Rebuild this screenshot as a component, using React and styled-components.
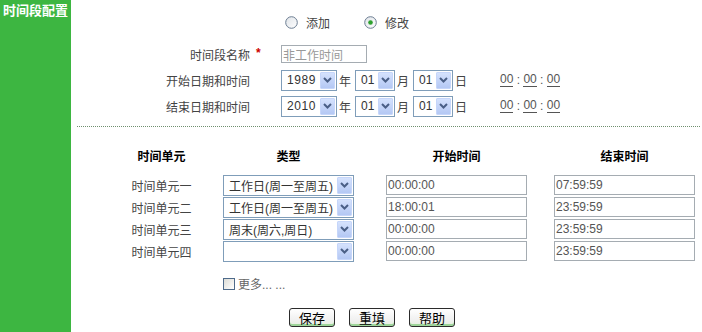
import { Fragment } from 'react';
import styled, { createGlobalStyle } from 'styled-components';

const GlobalStyle = createGlobalStyle`
  html, body {
    margin: 0;
    padding: 0;
    background: #fff;
  }
  body {
    font-family: "Liberation Sans", "Noto Sans CJK SC", sans-serif;
    font-size: 12px;
    color: #444;
  }
`;

const Page = styled.div`
  display: flex;
  width: 702px;
  height: 332px;
  overflow: hidden;
`;

const Sidebar = styled.div`
  width: 71px;
  flex-shrink: 0;
  background: #3db641;
  color: #fff;
  font-family: "Noto Sans CJK SC", sans-serif;
  font-weight: bold;
  font-size: 13px;
  line-height: 14px;
  padding: 3px 0 0 3px;
  box-sizing: border-box;
  white-space: nowrap;
`;

const Main = styled.div`
  flex: 1;
  display: flex;
  flex-direction: column;
`;

const RadioRow = styled.div`
  display: flex;
  align-items: center;
  margin: 15px 0 0 214px;
  height: 14px;
  gap: 34px;
`;

const RadioItem = styled.label`
  display: flex;
  align-items: center;
  gap: 8px;
  color: #444;
`;

const FormGrid = styled.div`
  display: grid;
  grid-template-columns: 179px auto;
  grid-auto-rows: 26px;
  column-gap: 31px;
  margin-top: 12px;
  align-items: center;
`;

const Label = styled.div`
  text-align: right;
  white-space: nowrap;
  color: #444;
  position: relative;
`;

const Star = styled.span`
  position: absolute;
  left: 100%;
  margin-left: 6px;
  color: #c00;
  font-weight: bold;
`;

const NameInput = styled.input`
  width: 86px;
  height: 18px;
  box-sizing: border-box;
  border: 1px solid #a5acb2;
  font-family: "Liberation Sans", "Noto Sans CJK SC", sans-serif;
  font-size: 12px;
  color: #999;
  padding: 0 1px;
  outline: none;
`;

const DateLine = styled.div`
  display: flex;
  align-items: center;
`;

const Unit = styled.span`
  margin: 0 4px 0 2px;
  color: #444;
`;

const DropBox = styled.div`
  display: flex;
  align-items: center;
  width: ${(p) => p.$w}px;
  height: 21px;
  box-sizing: border-box;
  border: 1px solid #7f9db9;
  background: #fff;
  padding: 1px;
`;

const DropValue = styled.span`
  flex: 1;
  padding-left: 4px;
  color: #333;
  white-space: nowrap;
  overflow: hidden;
  letter-spacing: ${(p) => (p.$wide ? '0.6px' : '0')};
`;

const DropArrow = styled.span`
  width: 15px;
  height: 17px;
  box-sizing: border-box;
  border: 1px solid #c6d6fa;
  border-radius: 1px;
  background: linear-gradient(#d5e2fd, #b4c8f4);
  display: flex;
  align-items: center;
  justify-content: center;
`;

const TimeGroup = styled.div`
  display: flex;
  align-items: center;
  margin-left: 29px;
  color: #555;
`;

const TimePart = styled.span`
  border-bottom: 1px solid #555;
  line-height: 13px;
`;

const Colon = styled.span`
  width: 10px;
  text-align: center;
`;

const Divider = styled.div`
  margin: 7px 2px 0 6px;
  border-top: 1px dotted #6f8f6f;
`;

const Table = styled.div`
  display: grid;
  grid-template-columns: 123px 131px 173px 168px;
  grid-template-rows: 30px repeat(4, 20px);
  row-gap: 2px;
  margin: 16px 0 0 29px;
`;

const Cell = styled.div`
  display: flex;
  justify-content: flex-end;
  align-items: center;
`;

const HeadCell = styled.div`
  justify-self: end;
  width: ${(p) => p.$w}px;
  text-align: center;
  font-weight: bold;
  color: #000;
  font-family: "Noto Sans CJK SC", sans-serif;
  line-height: 26px;
`;

const RowLabel = styled.div`
  width: 123px;
  text-align: center;
  color: #444;
`;

const TimeInput = styled.input`
  width: 141px;
  height: 20px;
  box-sizing: border-box;
  border: 1px solid #a5acb2;
  font-family: "Liberation Sans", sans-serif;
  font-size: 12px;
  color: #555;
  padding: 0 1px;
  outline: none;
`;

const MoreRow = styled.label`
  display: flex;
  align-items: center;
  margin: 14px 0 0 152px;
  color: #666;
  gap: 3px;
`;

const CheckBox = styled.span`
  width: 12px;
  height: 12px;
  box-sizing: border-box;
  border: 1px solid #4e6a8a;
  background: linear-gradient(135deg, #dcdcd6, #fff);
`;

const Buttons = styled.div`
  display: flex;
  gap: 14px;
  margin: 16px 0 0 218px;
`;

const Btn = styled.button`
  width: 46px;
  height: 19px;
  padding: 0;
  border: 1px solid #2b2b2b;
  border-radius: 3px;
  background: linear-gradient(#ffffff, #f0f0f0 65%, #e2efdc);
  box-shadow: inset 0 -2px 0 #9ed59a;
  font-family: "Noto Sans CJK SC", sans-serif;
  font-size: 13px;
  line-height: 17px;
  color: #000;
`;

const Radio = ({ checked }) => (
  <svg width="13" height="13" viewBox="0 0 13 13">
    <defs>
      <linearGradient id="rg" x1="0" y1="0" x2="1" y2="1">
        <stop offset="0" stopColor="#dfe3e8" />
        <stop offset="1" stopColor="#ffffff" />
      </linearGradient>
    </defs>
    <circle cx="6.5" cy="6.5" r="5.8" fill="url(#rg)" stroke="#6c7d92" strokeWidth="1" />
    {checked && <circle cx="6.5" cy="6.5" r="2.3" fill="#2ea12e" />}
  </svg>
);

const Dropdown = ({ w, value, wide }) => (
  <DropBox $w={w}>
    <DropValue $wide={wide}>{value}</DropValue>
    <DropArrow>
      <svg width="9" height="6" viewBox="0 0 9 6">
        <path d="M1 1 L4.5 4.5 L8 1" fill="none" stroke="#4a5f86" strokeWidth="2" />
      </svg>
    </DropArrow>
  </DropBox>
);

const Time = () => (
  <TimeGroup>
    <TimePart>00</TimePart>
    <Colon>:</Colon>
    <TimePart>00</TimePart>
    <Colon>:</Colon>
    <TimePart>00</TimePart>
  </TimeGroup>
);

const DateField = ({ year }) => (
  <DateLine>
    <Dropdown w={56} value={year} wide />
    <Unit>年</Unit>
    <Dropdown w={40} value="01" />
    <Unit>月</Unit>
    <Dropdown w={40} value="01" />
    <Unit>日</Unit>
    <Time />
  </DateLine>
);

const units = [
  { name: '时间单元一', type: '工作日(周一至周五)', start: '00:00:00', end: '07:59:59' },
  { name: '时间单元二', type: '工作日(周一至周五)', start: '18:00:01', end: '23:59:59' },
  { name: '时间单元三', type: '周末(周六,周日)', start: '00:00:00', end: '23:59:59' },
  { name: '时间单元四', type: '', start: '00:00:00', end: '23:59:59' },
];

export default function App() {
  return (
    <Page>
      <GlobalStyle />
      <Sidebar>时间段配置</Sidebar>
      <Main>
        <RadioRow>
          <RadioItem>
            <Radio />
            添加
          </RadioItem>
          <RadioItem>
            <Radio checked />
            修改
          </RadioItem>
        </RadioRow>

        <FormGrid>
          <Label>
            时间段名称<Star>*</Star>
          </Label>
          <div>
            <NameInput defaultValue="非工作时间" />
          </div>
          <Label>开始日期和时间</Label>
          <DateField year="1989" />
          <Label>结束日期和时间</Label>
          <DateField year="2010" />
        </FormGrid>

        <Divider />

        <Table>
          <HeadCell $w={123}>时间单元</HeadCell>
          <HeadCell $w={131}>类型</HeadCell>
          <HeadCell $w={141}>开始时间</HeadCell>
          <HeadCell $w={141}>结束时间</HeadCell>
          {units.map((u) => (
            <Fragment key={u.name}>
              <Cell>
                <RowLabel>{u.name}</RowLabel>
              </Cell>
              <Cell>
                <Dropdown w={131} value={u.type} />
              </Cell>
              <Cell>
                <TimeInput defaultValue={u.start} />
              </Cell>
              <Cell>
                <TimeInput defaultValue={u.end} />
              </Cell>
            </Fragment>
          ))}
        </Table>

        <MoreRow>
          <CheckBox />
          更多... ...
        </MoreRow>

        <Buttons>
          <Btn>保存</Btn>
          <Btn>重填</Btn>
          <Btn>帮助</Btn>
        </Buttons>
      </Main>
    </Page>
  );
}
